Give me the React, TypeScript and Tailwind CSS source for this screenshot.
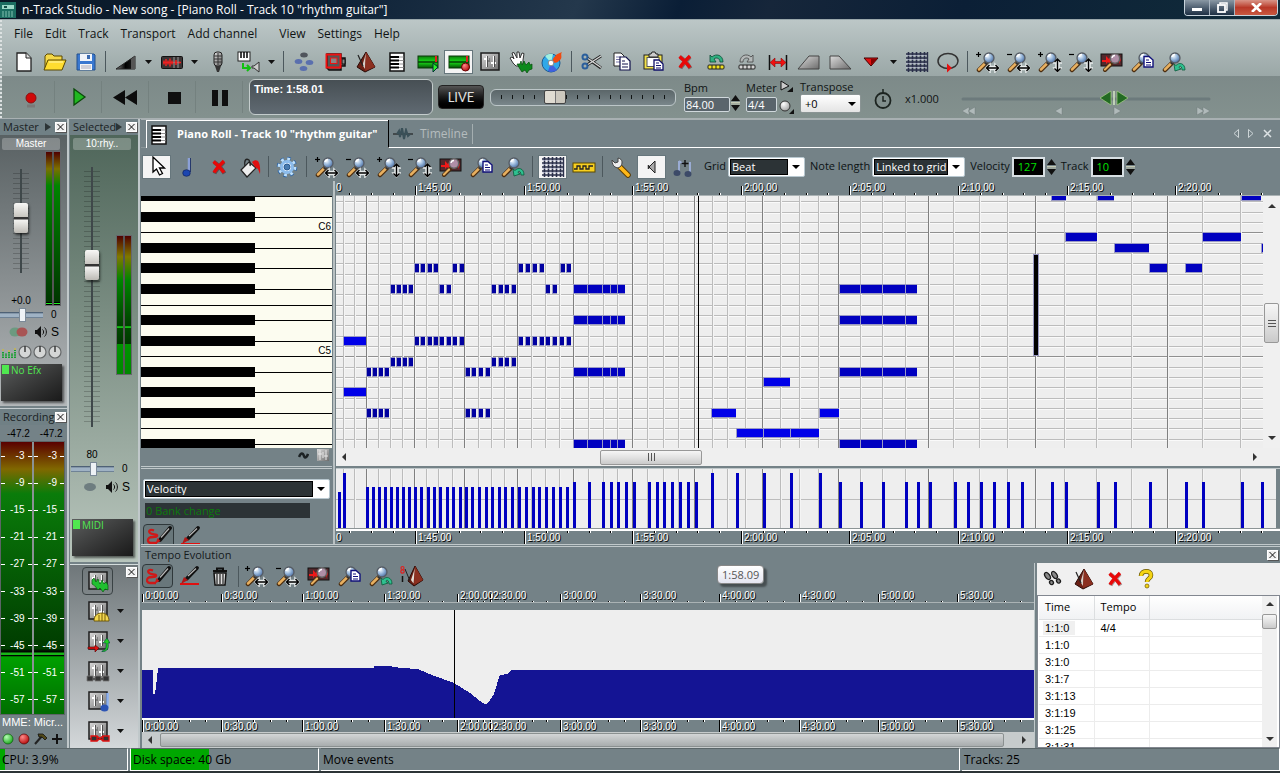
import React from "react";

type Kids = { children?: React.ReactNode };

const UI = "font-['Open_Sans','Noto_Sans',sans-serif]";
const ARIAL = "font-['Liberation_Sans',Arial,sans-serif]";

/* ---------- icon primitives ---------- */

function Svg({ children, w = 24 }: Kids & { w?: number }) {
  return (
    <svg width={w} height={22} viewBox={`0 0 ${w} 22`} aria-hidden="true" className="block shrink-0">
      {children}
    </svg>
  );
}

function Defs() {
  return (
    <svg width="0" height="0" className="absolute" aria-hidden="true">
      <defs>
        <radialGradient id="lens" cx="0.35" cy="0.3" r="0.8">
          <stop offset="0" stopColor="#f4faff" />
          <stop offset="0.5" stopColor="#8fb0d6" />
          <stop offset="1" stopColor="#3d5f94" />
        </radialGradient>
        <linearGradient id="silver" x1="0" y1="0" x2="1" y2="1">
          <stop offset="0" stopColor="#dcdcdc" />
          <stop offset="1" stopColor="#6c6c6c" />
        </linearGradient>
        <linearGradient id="dark" x1="0" y1="0" x2="1" y2="0">
          <stop offset="0" stopColor="#888" />
          <stop offset="0.5" stopColor="#000" />
          <stop offset="1" stopColor="#222" />
        </linearGradient>
        <linearGradient id="green" x1="0" y1="0" x2="0" y2="1">
          <stop offset="0" stopColor="#0c7a0c" />
          <stop offset="0.5" stopColor="#18e018" />
          <stop offset="1" stopColor="#064c06" />
        </linearGradient>
        <radialGradient id="ball" cx="0.35" cy="0.3" r="0.8">
          <stop offset="0" stopColor="#fff" />
          <stop offset="1" stopColor="#999" />
        </radialGradient>
        <radialGradient id="redball" cx="0.35" cy="0.3" r="0.8">
          <stop offset="0" stopColor="#ff8a8a" />
          <stop offset="1" stopColor="#b00000" />
        </radialGradient>
        <radialGradient id="greenball" cx="0.35" cy="0.3" r="0.8">
          <stop offset="0" stopColor="#b6ffb6" />
          <stop offset="1" stopColor="#0fa00f" />
        </radialGradient>
      </defs>
    </svg>
  );
}

const ArrowsH = () => (
  <g>
    <path d="M10 17l4-4v2.500h5V13l4 4-4 4v-2.500h-5V21z" fill="#e8ecec" stroke="#e8ecec" strokeWidth="1.500" />
    <path d="M10.500 17h12M13.500 14l-3 3 3 3M19.500 14l3 3-3 3" fill="none" stroke="#000" strokeWidth="1.400" />
  </g>
);
const ArrowsV = () => (
  <g>
    <path d="M19.500 8l3.500 4h-2v5h2l-3.500 4-3.500-4h2v-5h-2z" fill="#e8ecec" stroke="#e8ecec" strokeWidth="1.500" />
    <path d="M19.500 8v12.500M16.500 11l3-3 3 3M16.500 17.500l3 3 3-3" fill="none" stroke="#000" strokeWidth="1.400" />
  </g>
);

function Mag({ sign, children }: Kids & { sign?: "+" | "-" }) {
  return (
    <Svg>
      <path d="M3 19l7-7" stroke="#4a2c10" strokeWidth="4.500" strokeLinecap="round" />
      <path d="M3 18.500l6-6" stroke="#e8b060" strokeWidth="2.500" strokeLinecap="round" />
      <path d="M9 13l2-2" stroke="#333" strokeWidth="3" />
      <circle cx="13" cy="7" r="5" fill="url(#lens)" stroke="#565c64" strokeWidth="1.300" />
      <path d="M10 6a3 3 0 0 1 3-2.500" stroke="#fff" strokeWidth="1.300" fill="none" />
      {sign && <path d="M0 3.500h5" stroke="#000" strokeWidth="1.200" />}
      {sign === "+" && <path d="M2.500 1v5" stroke="#000" strokeWidth="1.200" />}
      {children}
    </Svg>
  );
}

const ZoomInH = () => <Mag sign="+"><ArrowsH /></Mag>;
const ZoomOutH = () => <Mag sign="-"><ArrowsH /></Mag>;
const ZoomInV = () => <Mag sign="+"><ArrowsV /></Mag>;
const ZoomOutV = () => <Mag sign="-"><ArrowsV /></Mag>;
const ZoomPage = () => (
  <Mag>
    <path d="M13 5.500h5l4 3.500v7h-9z" fill="#fff" stroke="#10107a" strokeWidth="1.400" />
    <path d="M15 9h3M15 11.500h5M15 14h5" stroke="#10107a" />
  </Mag>
);
const ZoomUndo = () => (
  <Mag>
    <path d="M12 13l1 7 6-2-2-1.500c0-2 3-2 3 2.500h3c0-7-6-8-9-4.500z" fill="#2fc090" stroke="#0a5a3a" strokeWidth="0.800" />
  </Mag>
);
const ZoomRegion = () => (
  <Svg>
    <rect x="1" y="3" width="21" height="12" fill="#53282c" stroke="#111" />
    <path d="M2 9h4V5l3 3 2-3v9l-3-3-2 2v-2H2z" fill="#f01818" />
    <path d="M19 5l2 4-2 4z" fill="#d01818" />
    <path d="M5 19l6-6" stroke="#4a2c10" strokeWidth="4" strokeLinecap="round" />
    <path d="M5 18.500l5-5" stroke="#e8b060" strokeWidth="2.200" strokeLinecap="round" />
    <circle cx="15" cy="7.500" r="4.700" fill="#c0a0bc" fillOpacity="0.850" stroke="#666" strokeWidth="1.500" />
    <path d="M12 7a3 3 0 0 1 3-2.500" stroke="#fff" strokeWidth="1.300" fill="none" />
  </Svg>
);

const NewFile = () => (
  <Svg><path d="M5 2h9l5 5v13H5z" fill="#fff" stroke="#222" strokeWidth="1.300" /><path d="M14 2v5h5" fill="#ddd" stroke="#222" /></Svg>
);
const OpenFile = () => (
  <Svg>
    <path d="M2 17V5l2-2h5l2 2h8v4" fill="#f4d848" stroke="#5a4800" />
    <path d="M1 19L5 9h18l-4 10z" fill="#ffdd30" stroke="#5a4800" /><path d="M6 11h14" stroke="#fff6b0" />
  </Svg>
);
const SaveFile = () => (
  <Svg>
    <path d="M3 3h17l1 1v15H3z" fill="#3a78d0" stroke="#24508c" />
    <rect x="6" y="3" width="12" height="7" fill="#f0f4fa" /><rect x="13" y="4" width="3" height="4" fill="#3a6ab0" />
    <rect x="6" y="13" width="12" height="6" fill="#f6f6f6" /><path d="M7 15h10M7 17h10" stroke="#aab" />
  </Svg>
);
const FadeRamp = () => (
  <Svg><path d="M2 18L21 5v13z" fill="url(#dark)" stroke="#222" /><path d="M17 8l4-3v13h-4z" fill="#555" /></Svg>
);
const WaveRegion = () => (
  <Svg>
    <rect x="1.500" y="5.500" width="21" height="12" rx="1" fill="#3a3434" stroke="#111" />
    <path d="M3 11.500h18M4 9.500v4M6 8v7M8 9.500v4M10 7.500v8M12 9.500v4M16 9v5M19 10.500v2" stroke="#f02020" strokeWidth="1.500" />
    <path d="M14 6v11M18 6v11" stroke="#999" />
  </Svg>
);
const Mic = () => (
  <Svg>
    <rect x="8" y="1" width="8" height="14" rx="3" fill="url(#silver)" stroke="#222" />
    <path d="M8 5h8M8 8h8M8 11h8M12 2v12" stroke="#333" /><path d="M9 15h6l-2 6h-2z" fill="#333" />
  </Svg>
);
const PianoRoute = () => (
  <Svg>
    <rect x="1" y="1" width="12" height="9" fill="#fff" stroke="#222" /><path d="M4 1v6M7 1v6M10 1v6" stroke="#000" strokeWidth="1.500" />
    <path d="M6 12v5h7m-3-3l3 3-3 3" fill="none" stroke="#10c010" strokeWidth="2" />
    <path d="M15 15h2l5-4v10l-5-4h-2z" fill="#ccc" stroke="#333" />
  </Svg>
);
const Dots = () => (
  <Svg>
    <ellipse cx="12" cy="4" rx="3.800" ry="2.500" fill="#50555c" />
    <g fill="#5a6fae"><ellipse cx="6.500" cy="10.500" rx="3.800" ry="2.500" /><ellipse cx="17.500" cy="11.500" rx="3.800" ry="2.500" /><ellipse cx="11.500" cy="17.500" rx="3.800" ry="2.500" /></g>
  </Svg>
);
const Chip = () => (
  <Svg>
    <path d="M4 3h14v4h4v8h-4v4H6l-2-2z" fill="#555" stroke="#111" strokeWidth="1.500" /><path d="M19 8h3v5h-3z" fill="#888" stroke="#111" />
    <rect x="3.500" y="3.500" width="14" height="13" fill="none" stroke="#f01010" strokeWidth="2" />
    <rect x="7.500" y="7" width="6.500" height="5.500" fill="#8a8484" stroke="#f01010" />
  </Svg>
);
const Metronome = () => (
  <Svg>
    <path d="M12 1L3 16l8 5 10-5z" fill="#6a2014" stroke="#2a0a06" /><path d="M12 2L8.500 14l2.500 4z" fill="#d8cfc8" />
    <path d="M12 1l-1 19 10-4z" fill="#8c3020" /><path d="M4 4l5 11" stroke="#222" strokeWidth="1.200" />
  </Svg>
);
const PianoIcon = () => (
  <Svg>
    <rect x="5" y="2" width="14" height="18" fill="#fff" stroke="#111" strokeWidth="1.500" />
    <path d="M5 6h9M5 9.500h9M5 13h9M5 16.500h9" stroke="#000" strokeWidth="1.800" /><path d="M14 6h5M14 9.500h5M14 13h5M14 16.500h5" stroke="#777" strokeWidth="0.800" />
  </Svg>
);
const TrackBars = ({ rec }: { rec?: boolean }) => (
  <Svg>
    <rect x="2" y="5" width="20" height="12" fill="url(#green)" stroke="#0a3a0a" />
    <path d="M2 11h20" stroke="#063c06" strokeWidth="1.500" /><path d="M20 5v6" stroke="#e02020" strokeWidth="2" />
    {rec ? <circle cx="18.500" cy="16" r="4" fill="url(#redball)" stroke="#600" /> : <path d="M17 12l5 4-5 5z" fill="#2af02a" stroke="#033" />}
  </Svg>
);
const MixerPanel = () => (
  <g>
    <rect x="3" y="2" width="18" height="17" fill="url(#silver)" stroke="#1c1c1c" strokeWidth="1.500" />
    <path d="M8.500 5v11M15.500 5v11" stroke="#fff" strokeWidth="1.200" /><path d="M6 8h5M13 12h5" stroke="#fff" strokeWidth="2.200" />
    <path d="M9.500 5v11M16.500 5v11M11 7v4" stroke="#333" strokeWidth="0.800" />
  </g>
);
const MixerIcon = () => <Svg><MixerPanel /></Svg>;
const Hand = () => (
  <Svg>
    <path d="M4 12L1 7l2-1 2 2-2-6 2-.500L8 7V1h2l1 6 2-5 2 .500L14 9v6H7z" fill="#fff" stroke="#333" />
    <path d="M8 13h3l1-3 1 4 2-4 2 4 3-3 1 3 2-1v5l-3 1-2 3-2-3-3 2-2-3z" fill="#0d8a1d" stroke="#064a0c" strokeWidth="0.700" />
  </Svg>
);
const Disc = () => (
  <Svg>
    <circle cx="11" cy="12" r="9" fill="#30a8e8" stroke="#1a5a90" /><path d="M11 12L5 5a9 9 0 0 1 8-2z" fill="#a0f0e0" /><path d="M11 12l6 7a9 9 0 0 1-9 1z" fill="#4060e0" />
    <path d="M13 11c-1-4 2-5 3-7 1-1 4-2 6-3-2 3 1 5-2 8-2 2-4 4-7 2z" fill="#f04a10" /><circle cx="11" cy="12" r="2.800" fill="#fff" stroke="#888" />
  </Svg>
);
const Scissors = () => (
  <Svg>
    <path d="M7 14L21 5M7 7l14 10" stroke="#222" strokeWidth="3" /><path d="M8 13.500L21 5M8 7.500L21 16.500" stroke="#d8d8d8" strokeWidth="1.300" />
    <circle cx="5" cy="6" r="2.500" fill="none" stroke="#2b5f9c" strokeWidth="2" /><circle cx="5" cy="15" r="2.500" fill="none" stroke="#2b5f9c" strokeWidth="2" />
  </Svg>
);
const CopyIcon = () => (
  <Svg>
    <path d="M3 2h7l3 3v10H3z" fill="#fff" stroke="#222" /><path d="M5 6h5M5 8.500h5M5 11h5" stroke="#77a" />
    <path d="M9 6h6l4 4v9H9z" fill="#fff" stroke="#10104a" strokeWidth="1.200" /><path d="M11 10h3M11 13h6M11 16h6" stroke="#10104a" />
  </Svg>
);
const PasteIcon = () => (
  <Svg>
    <rect x="2" y="4" width="18" height="14" fill="#f2e24a" stroke="#222" /><rect x="5" y="6.500" width="12" height="9" fill="#fff" stroke="#555" />
    <path d="M7 6V3h2l1-2h3l1 2h2v3z" fill="#ccc" stroke="#222" />
    <path d="M12 9h5l4 4v6h-9z" fill="#fff" stroke="#10106a" strokeWidth="1.300" /><path d="M14 12h3M14 14.500h5M14 17h5" stroke="#10106a" />
  </Svg>
);
const RedX = () => (
  <Svg>
    <path d="M7 6c3 2 8 7 10.500 11.500M17 6c-3 3-8 8-9.500 11.500" stroke="#400" strokeOpacity="0.400" strokeWidth="4" fill="none" />
    <path d="M6.500 5.500C9 7.500 14 12.500 17 16.500M17 5C14 8 9 13 7 16.500" stroke="#e80808" strokeWidth="3.400" fill="none" />
  </Svg>
);
const UndoBar = ({ gray }: { gray?: boolean }) => (
  <Svg>
    {gray ? (
      <path d="M18 11V4l-2 2c-4-4-11-2-11 5h3c0-4 4-5 6-3l-2 3z" fill="#b4b8b8" stroke="#444" strokeWidth="0.800" />
    ) : (
      <path d="M6 11V4l2 2c4-4 11-2 11 5h-3c0-4-4-5-6-3l2 3z" fill="#2fb080" stroke="#0a4a34" strokeWidth="0.800" />
    )}
    <rect x="4" y="14" width="16" height="4" rx="1" fill={gray ? "#d4d4d4" : "#f0e020"} stroke="#222" /><path d="M8 14v4M12 14v4M16 14v4" stroke="#222" />
  </Svg>
);
const TrimIcon = () => (
  <Svg><path d="M3.500 4v15M20.500 4v15" stroke="#111" strokeWidth="1.500" /><path d="M4 11.500l5-4.500v3.500h6V7l5 4.500-5 4.500v-3.500H9V16z" fill="#f01010" stroke="#700" strokeWidth="0.500" /></Svg>
);
const RampIn = () => <Svg><path d="M1 18L12 5h10v13z" fill="url(#silver)" stroke="#444" /></Svg>;
const RampOut = () => <Svg><path d="M2 18V5h9l12 13z" fill="url(#silver)" stroke="#444" /></Svg>;
const RedTriangle = () => <Svg><path d="M5 7h14l-7 8z" fill="#e01010" stroke="#400" /><path d="M12 8h6l-6 6z" fill="#800" /></Svg>;
const GridIcon = () => (
  <Svg>
    {[3, 7, 11, 15, 19].map((v) => <path key={v} d={`M1 ${v}h22M${v + 0.5} 1v20`} stroke="#2a2f4a" strokeWidth="1.600" />)}
    {[4, 8, 12, 16].map((v) => <path key={v} d={`M1 ${v + 0.5}h22`} stroke="#c4c8dc" strokeWidth="0.600" />)}
    <path d="M22.500 1v20" stroke="#2a2f4a" strokeWidth="1.400" />
  </Svg>
);
const LoopIcon = () => <Svg><ellipse cx="12" cy="10" rx="10" ry="7.500" fill="none" stroke="#333" strokeWidth="1.500" /><path d="M11 12.500l5 4.500-5 4.500z" fill="#e81010" /></Svg>;
const Pointer = () => <Svg><path d="M8 1v15l3.500-3 3 6 3-1.500-3-5.500h5z" fill="#fff" stroke="#000" strokeWidth="1.300" /></Svg>;
const NoteIcon = () => (
  <Svg><path d="M13 2v15" stroke="#8ba0d8" strokeWidth="2.500" /><path d="M14.500 2v14" stroke="#26386c" /><ellipse cx="10.500" cy="17" rx="3.800" ry="3.300" fill="#1c46b0" stroke="#0a1a50" strokeWidth="0.600" /></Svg>
);
const Bucket = () => (
  <Svg>
    <path d="M3 14L11 6l7 6-9 9z" fill="#eee" stroke="#222" strokeWidth="1.200" /><path d="M7 10c-1-6 1-8 4-6 1 2 2 4 1 6" fill="none" stroke="#222" strokeWidth="1.300" />
    <path d="M14 6c5-4 9-1 8 12l-2-5-3-2z" fill="#e01010" />
  </Svg>
);
const Gear = () => (
  <Svg>
    <circle cx="12" cy="11" r="8.500" fill="none" stroke="#2a62a4" strokeWidth="3.500" strokeDasharray="3.400 3.270" />
    <circle cx="12" cy="11" r="8" fill="none" stroke="#bfe0fa" strokeWidth="2.800" strokeDasharray="2.800 3.480" />
    <circle cx="12" cy="11" r="5.500" fill="#e8f4ff" stroke="#8cbcec" strokeWidth="3" /><circle cx="12" cy="11" r="3" fill="#4a7cb0" stroke="#2a5a90" />
  </Svg>
);
const SquareWave = () => (
  <Svg><rect x="1" y="7" width="22" height="9" fill="#f8d020" stroke="#5a4800" /><path d="M2 13h3v-3h3v3h3v-3h3v3h3v-3h4" fill="none" stroke="#222" strokeWidth="1.300" /></Svg>
);
const Wrench = () => (
  <Svg><path d="M11 11l8 8" stroke="#5a3a00" strokeWidth="5.500" strokeLinecap="round" /><path d="M11 11l8 8" stroke="#ffb818" strokeWidth="3.800" strokeLinecap="round" />
    <path d="M3 4l3 3 3-1 0-4c5 1 5 6 2 9-3 2-8 0-8-7z" fill="#eee" stroke="#444" /></Svg>
);
const Speaker = () => <Svg><path d="M9 11l6-6v12z" fill="#aaa" stroke="#222" /><path d="M8.500 9v4" stroke="#333" strokeWidth="1.500" /></Svg>;
const NotesPlus = () => (
  <Svg>
    <path d="M8 5v12M19 6v12M8 5l4 3" stroke="#9aacd4" strokeWidth="2" /><ellipse cx="6" cy="17" rx="3.500" ry="3" fill="#3c4a68" /><ellipse cx="17" cy="18" rx="3.500" ry="3" fill="#3c4a68" />
    <path d="M14 4v7M10.500 7.500h7" stroke="#111" strokeWidth="1.400" />
  </Svg>
);
const BrushCurve = () => (
  <Svg w={26}>
    <path d="M8 5.500C4 4 2 6 4 8s8 1 7 3-6 0-8 2-1 5 2 5h6" fill="none" stroke="#d01818" strokeWidth="2.300" />
    <path d="M14 15L24 3" stroke="#111" strokeWidth="3.800" strokeLinecap="round" /><path d="M15 12.500L23 3.500" stroke="#b8b8b8" strokeWidth="1.200" /><path d="M9.500 19l2-6 3 3z" fill="#d01818" />
  </Svg>
);
const BrushLine = () => (
  <Svg>
    <path d="M3 19h19" stroke="#e01010" strokeWidth="2" /><path d="M10 13.500L20 3" stroke="#111" strokeWidth="3.800" strokeLinecap="round" />
    <path d="M11 11L19 3.500" stroke="#b8b8b8" strokeWidth="1.200" /><path d="M4 19l3-7 4 3z" fill="#b01818" />
  </Svg>
);
const Trash = () => (
  <Svg><path d="M5 6h14M9 6V3.500h6V6" stroke="#111" strokeWidth="2" fill="none" /><path d="M6 8h12l-1 12H7z" fill="#ddd" stroke="#111" strokeWidth="1.500" /><path d="M9 9v10M12 9v10M15 9v10" stroke="#333" strokeWidth="1.300" /></Svg>
);
const TempoMetronome = () => (
  <Svg>
    <path d="M15 1L8 16l6 5 9-6z" fill="#6a2014" stroke="#2a0a06" /><path d="M15 3l-4 12 2.500 3.500z" fill="#e4dcd4" /><path d="M15 1l-1 19 9-5z" fill="#8c3020" /><path d="M5 4l5 12" stroke="#222" />
    <circle cx="2.500" cy="3" r="1.500" fill="none" stroke="#e02020" strokeWidth="1.200" /><circle cx="2.500" cy="6.500" r="1.700" fill="none" stroke="#e02020" strokeWidth="1.200" /><path d="M2.500 11v6" stroke="#111" strokeWidth="1.500" />
  </Svg>
);
const Footsteps = () => (
  <Svg>
    <g fill="#888" stroke="#1c1c1c" strokeWidth="1.300">
      <ellipse cx="6.500" cy="8" rx="2.200" ry="4" transform="rotate(-35 6.500 8)" /><ellipse cx="10.500" cy="14.500" rx="1.800" ry="2.200" transform="rotate(-35 10.500 14.500)" />
      <ellipse cx="13.500" cy="7" rx="2.200" ry="4" transform="rotate(-35 13.500 7)" /><ellipse cx="17.500" cy="13" rx="1.800" ry="2.200" transform="rotate(-35 17.500 13)" />
    </g>
  </Svg>
);
const Question = () => (
  <Svg><path d="M7 8c0-6 10-6 10-1 0 4-4 3-4 7" fill="none" stroke="#6a5600" strokeWidth="4.600" /><path d="M7 8c0-6 10-6 10-1 0 4-4 3-4 7" fill="none" stroke="#f4d414" strokeWidth="3.200" /><circle cx="13" cy="18" r="2" fill="#f4d414" stroke="#6a5600" strokeWidth="0.700" /></Svg>
);

/* ---------- small controls ---------- */

function Tool({ label, on, children }: Kids & { label: string; on?: boolean }) {
  return (
    <button
      type="button"
      aria-label={label}
      className={
        on
          ? "mx-px flex h-6 w-[29px] shrink-0 items-center justify-center border border-[#66767c] bg-[#f4f4f4]"
          : "flex h-6 w-[31px] shrink-0 items-center justify-center"
      }
    >
      {children}
    </button>
  );
}

function DarkTool({ label, children }: Kids & { label: string }) {
  return (
    <button type="button" aria-label={label} className="flex h-6 w-[31px] shrink-0 items-center justify-center rounded-sm border border-[#2f383b] bg-[#69777b]">
      {children}
    </button>
  );
}

const Caret = ({ label }: { label: string }) => (
  <button type="button" aria-label={label} className="flex h-6 w-[15px] shrink-0 items-center justify-center">
    <svg width="7" height="4" viewBox="0 0 7 4"><path d="M0 0h7L3.500 4z" fill="#111" /></svg>
  </button>
);
const Sep = ({ narrow }: { narrow?: boolean }) => (
  <span className={narrow ? "flex w-1.5 shrink-0 justify-center" : "flex w-[9px] shrink-0 justify-center"}>
    <span className="h-[21px] w-px bg-[#4c585d]" />
  </span>
);

const CloseBox = ({ label }: { label: string }) => (
  <button type="button" aria-label={label} className="flex h-[10px] w-[11px] shrink-0 items-center justify-center border border-white bg-[#f0f0f0] shadow-[1px_1px_0_#555]">
    <svg width="7" height="6" viewBox="0 0 7 6"><path d="M.5 0l6 6M6.500 0l-6 6" stroke="#111" /></svg>
  </button>
);

const Spin = ({ label }: { label: string }) => (
  <button type="button" aria-label={label} className="flex h-4 w-[9px] shrink-0 items-center justify-center">
    <svg width="9" height="16" viewBox="0 0 9 16"><path d="M0 6l4.500-6L9 6zM0 10h9l-4.500 6z" fill="#111" /><path d="M0 7.500h9M0 9h9" stroke="#d8dcc0" strokeWidth="0.800" /></svg>
  </button>
);

function DarkSelect({ id, value, className }: { id: string; value: string; className: string }) {
  return (
    <span className={`flex h-5 shrink-0 items-center rounded-xs border border-[#b8c8d0] bg-white p-px ${className}`}>
      <select id={id} defaultValue={value} aria-label={id} className="h-full min-w-0 flex-1 appearance-none rounded-none border border-black bg-[#2c3336] pl-px text-[11px] leading-3 text-white outline-none">
        <option>{value}</option>
      </select>
      <svg width="15" height="4" viewBox="0 0 15 4" className="pointer-events-none"><path d="M4 0h8l-4 4z" fill="#000" /></svg>
    </span>
  );
}

/* ---------- header ---------- */

function TitleBar() {
  return (
    <header className="flex h-5 shrink-0 items-start justify-between border-b border-[#9aa8ac] bg-[linear-gradient(110deg,#0a1826,#0d2136_25%,#24384c_45%,#0a1e36_53%,#16263a_60%,#0b1f36_75%,#112c3a)]">
      <h1 className={`flex items-center gap-1.5 text-[12px] leading-5 text-white ${UI}`}>
        <svg width="16" height="16" viewBox="0 0 16 16"><rect width="16" height="16" fill="#1c6e62" /><path d="M2 3h12v4H2z" fill="#9cd8c8" /><path d="M3 9v6M6 9v6M9 9v6M12 9v6" stroke="#80c0b0" /><path d="M4 4h3v2H4z" fill="#135048" /></svg>
        n-Track Studio - New song - [Piano Roll - Track 10 "rhythm guitar"]
      </h1>
      <div className="mr-0.5 flex h-4 overflow-hidden rounded-b border border-t-0 border-[#c8d4dc]">
        <button type="button" aria-label="Minimize" className="flex w-[25px] items-center justify-center border-r border-[#a8b4c0] bg-linear-to-b from-[#8a98a4] to-[#1e3044]">
          <span className="mt-1 h-[3px] w-[10px] bg-white" />
        </button>
        <button type="button" aria-label="Restore" className="flex w-[25px] items-center justify-center border-r border-[#a8b4c0] bg-linear-to-b from-[#8a98a4] to-[#1e3044]">
          <svg width="11" height="11" viewBox="0 0 11 11"><path d="M3 2V1h7v7H9" fill="none" stroke="#fff" strokeWidth="1.500" /><rect x="1" y="3" width="7" height="7" fill="none" stroke="#fff" strokeWidth="1.800" /></svg>
        </button>
        <button type="button" aria-label="Close" className="flex w-[42px] items-center justify-center bg-linear-to-b from-[#d89488] via-[#b83828] to-[#c85840]">
          <svg width="11" height="9" viewBox="0 0 11 9"><path d="M1 0l9 9M10 0L1 9" stroke="#fff" strokeWidth="2.600" /></svg>
        </button>
      </div>
    </header>
  );
}

const menus = ["File", "Edit", "Track", "Transport", "Add channel", "View", "Settings", "Help"];

function MenuBar() {
  return (
    <nav className={`flex h-[27px] shrink-0 items-center gap-3 pl-3 text-[12px] text-[#101414] ${UI}`}>
      {menus.map((m) => (
        <button key={m} type="button" className={m === "View" ? "ml-2.5" : ""}>{m}</button>
      ))}
    </nav>
  );
}

function MainToolbar() {
  return (
    <div className="flex h-[29px] shrink-0 items-center pl-1.5">
      <Tool label="New"><NewFile /></Tool>
      <Tool label="Open"><OpenFile /></Tool>
      <Tool label="Save"><SaveFile /></Tool>
      <Sep />
      <Tool label="Volume envelope"><FadeRamp /></Tool><Caret label="Envelope options" />
      <Tool label="Wave tracks"><WaveRegion /></Tool><Caret label="Wave options" />
      <Tool label="Audio input"><Mic /></Tool>
      <Tool label="MIDI routing"><PianoRoute /></Tool><Caret label="MIDI options" />
      <Sep />
      <Tool label="Loops"><Dots /></Tool>
      <Tool label="Plug-ins"><Chip /></Tool>
      <Tool label="Metronome"><Metronome /></Tool>
      <Tool label="Piano roll"><PianoIcon /></Tool>
      <Tool label="Playback meters"><TrackBars /></Tool>
      <Tool label="Recording meters" on><TrackBars rec /></Tool>
      <Tool label="Mixer"><MixerIcon /></Tool>
      <Tool label="Hand tool"><Hand /></Tool>
      <Tool label="Burn disc"><Disc /></Tool>
      <Sep />
      <Tool label="Cut"><Scissors /></Tool>
      <Tool label="Copy"><CopyIcon /></Tool>
      <Tool label="Paste"><PasteIcon /></Tool>
      <Tool label="Delete"><RedX /></Tool>
      <Tool label="Undo"><UndoBar /></Tool>
      <Tool label="Redo"><UndoBar gray /></Tool>
      <Tool label="Trim"><TrimIcon /></Tool>
      <Tool label="Fade in"><RampIn /></Tool>
      <Tool label="Fade out"><RampOut /></Tool>
      <Tool label="Marker"><RedTriangle /></Tool><Caret label="Marker options" />
      <Tool label="Grid"><GridIcon /></Tool>
      <Tool label="Loop"><LoopIcon /></Tool>
      <Sep />
      <Tool label="Zoom in"><ZoomInH /></Tool>
      <Tool label="Zoom out"><ZoomOutH /></Tool>
      <Tool label="Zoom in vertically"><ZoomInV /></Tool>
      <Tool label="Zoom out vertically"><ZoomOutV /></Tool>
      <Tool label="Zoom to selection"><ZoomRegion /></Tool>
      <Tool label="Zoom to song"><ZoomPage /></Tool>
      <Tool label="Previous zoom"><ZoomUndo /></Tool>
    </div>
  );
}

function TransportButton({ label, children }: Kids & { label: string }) {
  return (
    <button type="button" aria-label={label} className="flex h-8 w-[47px] shrink-0 items-center justify-center border-r border-[#74817f]">
      <svg width="26" height="22" viewBox="0 0 26 22">{children}</svg>
    </button>
  );
}

function Transport() {
  return (
    <div className={`flex h-[42px] shrink-0 items-center bg-linear-to-b from-[#7d8a89] to-[#83918e] pl-1.5 text-[11px] leading-3 text-[#101414] ${UI}`}>
      <TransportButton label="Record"><circle cx="13" cy="12" r="5" fill="#d00808" stroke="#8a1010" /><path d="M9 20h8" stroke="#6a4a4a" strokeOpacity="0.300" strokeWidth="3" /></TransportButton>
      <TransportButton label="Play"><path d="M9 3l11 8-11 8z" fill="#20b820" stroke="#0a4a0a" strokeWidth="1.300" /></TransportButton>
      <TransportButton label="Rewind"><path d="M13 4v15L1 11.500zM25 4v15l-12-7.500z" fill="#0c0c0c" /></TransportButton>
      <TransportButton label="Stop"><rect x="9" y="6" width="13" height="12" fill="#101010" /></TransportButton>
      <TransportButton label="Pause"><path d="M6 4h6v16H6zM16 4h6v16h-6z" fill="#101010" /></TransportButton>
      <output className={`ml-1.5 h-9 w-[184px] shrink-0 rounded-md border border-[#c4cccc] bg-linear-to-b from-[#474f54] to-[#606a72] px-1 pt-[3px] text-[11px] font-bold leading-3 text-white ${ARIAL}`}>
        Time: 1:58.01
      </output>
      <button type="button" className="ml-[5px] h-6 w-[46px] shrink-0 rounded border border-[#222] bg-linear-to-b from-[#555] via-[#1a1a1a] to-[#000] font-['Lato',sans-serif] text-[13px] text-[#e0e0e0]">LIVE</button>
      <div className="relative ml-1.5 flex h-[17px] w-[186px] shrink-0 items-center justify-between rounded-md border border-[#bcc6c8] bg-linear-to-b from-[#5b6669] to-[#79868a] px-2.5">
        {Array.from({ length: 16 }, (_, i) => <span key={i} className="h-1 w-px bg-[#101414]" />)}
        <input
          type="range"
          aria-label="Song position"
          defaultValue={33}
          className="absolute inset-0 m-0 w-full appearance-none bg-transparent [&::-webkit-slider-thumb]:h-3.5 [&::-webkit-slider-thumb]:w-[22px] [&::-webkit-slider-thumb]:appearance-none [&::-webkit-slider-thumb]:rounded-xs [&::-webkit-slider-thumb]:border [&::-webkit-slider-thumb]:border-[#444] [&::-webkit-slider-thumb]:bg-[linear-gradient(to_right,#e0dcd2_48%,#777_48%,#777_54%,#ccc8be_54%)]"
        />
      </div>
      <div className="ml-2 flex shrink-0 flex-col gap-[3px]">
        <label htmlFor="bpm">Bpm</label>
        <input id="bpm" defaultValue="84.00" className="h-[15px] w-[46px] rounded-xs border border-[#d0d8dc] bg-[#5a656c] px-px text-[11px] text-white" />
      </div>
      <div className="ml-px mt-3"><Spin label="Adjust tempo" /></div>
      <div className="ml-1.5 flex shrink-0 flex-col gap-[3px]">
        <label htmlFor="meter" className="w-[31px]">Meter</label>
        <input id="meter" defaultValue="4/4" className="h-[15px] w-[31px] rounded-xs border border-[#d0d8dc] bg-[#5a656c] px-px text-[11px] text-white" />
      </div>
      <div className="ml-0.5 flex flex-col gap-2">
        <button type="button" aria-label="Tap tempo"><svg width="15" height="12" viewBox="0 0 15 12"><path d="M2 1l8 5-8 4z" fill="#ccc" stroke="#111" /><path d="M14 7v5H8z" fill="#111" /></svg></button>
        <button type="button" aria-label="Beat sync"><svg width="15" height="14" viewBox="0 0 15 14"><circle cx="6" cy="6" r="5" fill="url(#ball)" stroke="#333" /><path d="M15 9v5h-5z" fill="#111" /></svg></button>
      </div>
      <div className="ml-1.5 flex shrink-0 flex-col gap-px">
        <label htmlFor="transpose">Transpose</label>
        <span className="flex h-[19px] w-[61px] items-center rounded-xs border border-[#8a9494] bg-linear-to-b from-white to-[#e4e4e4]">
          <select id="transpose" className="h-full min-w-0 flex-1 appearance-none bg-transparent pl-1 text-[11px] leading-3 text-black outline-none"><option>+0</option></select>
          <svg width="15" height="4" viewBox="0 0 15 4" className="pointer-events-none"><path d="M3 0h8L7 4z" /></svg>
        </span>
      </div>
      <svg width="20" height="22" viewBox="0 0 20 22" className="ml-3 mt-1 shrink-0"><circle cx="10" cy="12.500" r="7.500" fill="none" stroke="#1c2420" strokeWidth="1.800" /><path d="M10 1v4M10 8v5h3" stroke="#1c2420" strokeWidth="1.500" fill="none" /></svg>
      <span className="ml-3 mt-1 w-[34px] shrink-0">x1.000</span>
      <div className="relative ml-[22px] h-9 w-[250px] shrink-0">
        <svg width="250" height="36" viewBox="0 0 250 36">
          <path d="M2 20h246" stroke="#6c7a7c" strokeWidth="3" strokeLinecap="round" />
          <path d="M139 19l11-7v14z" fill="#236a23" stroke="#a8d088" strokeOpacity="0.700" /><path d="M153 12v14" stroke="#d4e8c4" strokeWidth="1.500" /><path d="M167 19l-11-7v14z" fill="#236a23" stroke="#a8d088" strokeOpacity="0.700" />
          <g fill="#b0baba" stroke="#6a7676" strokeWidth="0.400"><path d="M1 32l7-4v8zM7 32l7-4v8zM94 32l7-4v8zM160 32l-7-4v8zM249 32l-7-4v8zM243 32l-7-4v8z" /></g>
        </svg>
        <input type="range" aria-label="Playback speed" defaultValue={62} className="absolute inset-0 m-0 w-full opacity-0" />
      </div>
    </div>
  );
}

/* ---------- mixer strips ---------- */

function PanelHeader({ title, arrow }: { title: string; arrow?: boolean }) {
  return (
    <div className={`flex h-4 shrink-0 items-center justify-between bg-[#708085] pl-[3px] text-[11px] leading-4 text-[#1a2224] ${UI}`}>
      <span>{title}</span>
      <span className="flex items-center gap-1 pr-px">
        {arrow && <svg width="6" height="8" viewBox="0 0 6 8"><path d="M0 0l6 4-6 4z" fill="#2c3436" /></svg>}
        <CloseBox label={`Close ${title}`} />
      </span>
    </div>
  );
}

function Fader({ label, value, className }: { label: string; value: number; className: string }) {
  return (
    <div className={`relative ml-[13px] w-4 ${className}`}>
      <div className="absolute inset-y-1 left-0 w-4 bg-[repeating-linear-gradient(to_bottom,#0003_0_1px,transparent_1px_5px)]" />
      <div className="absolute inset-y-0 left-[7px] w-0.5 bg-[#3f484a]" />
      <input
        type="range"
        aria-label={label}
        defaultValue={value}
        className="absolute inset-0 m-0 h-full w-4 appearance-none bg-transparent [direction:rtl] [writing-mode:vertical-lr] [&::-webkit-slider-thumb]:h-[30px] [&::-webkit-slider-thumb]:w-3.5 [&::-webkit-slider-thumb]:appearance-none [&::-webkit-slider-thumb]:rounded-xs [&::-webkit-slider-thumb]:bg-[linear-gradient(to_bottom,#f8f8f6,#c8c6c0_46%,#333_48%,#333_54%,#f4f4f2_56%,#bcbab4)] [&::-webkit-slider-thumb]:shadow-[1px_2px_3px_#0009]"
      />
    </div>
  );
}

function Pan({ label }: { label: string }) {
  return (
    <input
      type="range"
      aria-label={label}
      defaultValue={52}
      className="m-0 h-4 w-[43px] appearance-none bg-[linear-gradient(to_bottom,transparent_5px,#34475c_5px,#9fb2c4_7px,#9fb2c4_10px,#3f5368_11px,transparent_11px)] [&::-webkit-slider-thumb]:h-3.5 [&::-webkit-slider-thumb]:w-[7px] [&::-webkit-slider-thumb]:appearance-none [&::-webkit-slider-thumb]:border [&::-webkit-slider-thumb]:border-[#7c8a98] [&::-webkit-slider-thumb]:bg-[#eef2f6]"
    />
  );
}

const SpeakerSmall = () => (
  <svg width="12" height="12" viewBox="0 0 12 12"><path d="M0 4h2l4-4v12L2 8H0z" fill="#111" /><path d="M7.500 3.500c1.500 1 1.500 4 0 5M9.500 1.500c2.500 2 2.500 7 0 9" stroke="#111" fill="none" /></svg>
);

function EffectBox({ text }: { text: string }) {
  return (
    <button type="button" className={`flex h-[37px] w-[61px] shrink-0 items-start gap-0.5 bg-linear-to-br from-[#5c5e5e] to-[#1a1a1a] p-px text-[10px] leading-[10px] text-[#50e850] shadow-[2px_2px_2px_#0008] ${UI}`}>
      <span className="h-[9px] w-[7px] bg-[#50e850]" />
      {text}
    </button>
  );
}

const StripLabel = ({ children }: Kids) => (
  <div className={`ml-0.5 mt-[3px] h-3 w-[58px] shrink-0 rounded-xs bg-white/25 text-center text-[10px] leading-3 text-white ${ARIAL}`}>{children}</div>
);

function MasterStrip() {
  return (
    <section className={`flex shrink-0 flex-col text-[10px] leading-3 text-black ${ARIAL}`}>
      <PanelHeader title="Master" arrow />
      <div className="flex flex-col bg-linear-to-b from-[#596163] to-[#b4b8ba] pb-[5px]">
        <StripLabel>Master</StripLabel>
        <div className="flex">
          <div className="flex w-[45px] shrink-0 flex-col pt-[19px]">
            <Fader label="Master volume" value={54} className="h-[104px]" />
            <span className="mt-[22px] w-[42px] text-center">+0.0</span>
          </div>
          <div className="mt-px flex h-[155px] w-4 gap-0.5 border border-[#66666c] bg-[#555]">
            {[0, 1].map((i) => (
              <span key={i} className="flex flex-1 flex-col justify-end bg-[linear-gradient(to_bottom,#500000,#7c7000_11%,#008400_22%,#003400)]"><span className="h-[3px] border-y border-black bg-[#20f020]" /></span>
            ))}
          </div>
        </div>
        <div className="flex items-center"><Pan label="Master pan" /><span className="ml-2">0</span></div>
        <div className="flex h-[18px] items-center pl-[9px]">
          <svg width="20" height="10" viewBox="0 0 20 10"><ellipse cx="6" cy="5" rx="5.500" ry="4.500" fill="#6c9a80" /><ellipse cx="13" cy="5" rx="5.500" ry="4.500" fill="#a85454" /></svg>
          <span className="ml-1.5"><SpeakerSmall /></span>
          <span className="ml-1 text-[12px]">S</span>
        </div>
        <div className="mt-0.5 flex h-[18px] items-center gap-px pl-0.5">
          <svg width="15" height="12" viewBox="0 0 15 12"><path d="M1 12V5M4 12V7M7 12V6M10 12V7M13 12V4" stroke="#18a030" strokeWidth="2" strokeDasharray="1.500 0.800" /><path d="M0 4h2M12 3h2M6 5h2" stroke="#d8c020" /></svg>
          {[0, 1, 2].map((i) => (
            <svg key={i} width="14" height="14" viewBox="0 0 14 14"><circle cx="7" cy="7" r="6" fill="#d4d6d6" stroke="#66696a" strokeWidth="1.200" /><path d="M7 1v6" stroke="#222" strokeWidth="1.300" /></svg>
          ))}
        </div>
        <div className="mt-[3px] pl-px"><EffectBox text="No Efx" /></div>
      </div>
    </section>
  );
}

function RecordingPanel() {
  return (
    <section className={`flex min-h-0 flex-1 flex-col border-t border-[#c4cccf] text-[10px] text-black ${ARIAL}`}>
      <PanelHeader title="Recording" />
      <div className="flex h-4 shrink-0 items-center gap-2.5 pl-[7px]"><span>-47.2</span><span>-47.2</span></div>
      <div className="mr-0.5 flex min-h-0 flex-1 gap-0.5 border border-[#5c6466] bg-[#8a9294]">
        {[0, 1].map((c) => (
          <div key={c} className="flex flex-1 flex-col justify-between overflow-hidden bg-[linear-gradient(to_bottom,#5a0000,#806800_10%,#0a7c0a_19%,#003c00_76%,#000_77%,#20f020_78%,#000_78.500%,#00a000_79%,#006e00)] py-2 text-white">
            {[3, 9, 15, 21, 27, 33, 39, 45, 51, 57].map((n) => (
              <span key={n} className="flex h-3 items-center justify-between leading-3">
                <span className="h-px w-1 bg-white" />
                <span className="ml-auto pr-[3px]">-{n}</span>
                <span className="h-px w-1 bg-white" />
              </span>
            ))}
          </div>
        ))}
      </div>
      <p className="shrink-0 truncate pl-0.5 text-[11px] leading-[15px] text-white">MME: Micr...</p>
      <div className="flex h-[18px] shrink-0 items-center gap-1 pl-0.5">
        <svg width="12" height="12" viewBox="0 0 12 12"><circle cx="6" cy="6" r="5" fill="url(#greenball)" stroke="#0a5a0a" strokeWidth="0.700" /></svg>
        <svg width="12" height="12" viewBox="0 0 12 12"><circle cx="6" cy="6" r="5" fill="url(#redball)" stroke="#500" strokeWidth="0.700" /></svg>
        <svg width="13" height="12" viewBox="0 0 13 12"><path d="M1 11l7-8" stroke="#222" strokeWidth="2" /><path d="M4 1h5l4 4-2 2-3-3H5z" fill="#504818" stroke="#111" strokeWidth="0.800" /></svg>
        <svg width="12" height="12" viewBox="0 0 12 12"><path d="M6 1v10M1 6h10" stroke="#111" strokeWidth="2" /></svg>
      </div>
    </section>
  );
}

function SelectedStrip() {
  return (
    <section className={`flex shrink-0 flex-col text-[10px] leading-3 text-black ${ARIAL}`}>
      <PanelHeader title="Selected" arrow />
      <div className="flex flex-col bg-linear-to-b from-[#4f665a] to-[#b9c6bd] pb-1.5 pl-px">
        <StripLabel>10:rhy..</StripLabel>
        <div className="flex">
          <div className="flex w-[45px] shrink-0 flex-col pt-[17px]">
            <Fader label="Track volume" value={64} className="h-[260px]" />
            <span className="mt-[22px] w-[42px] text-center">80</span>
          </div>
          <div className="mt-[85px] flex h-[140px] w-4 gap-0.5 border border-[#66666c] bg-[#555]">
            {[0, 1].map((i) => (
              <span key={i} className="flex-1 bg-[linear-gradient(to_bottom,#500000,#807800_15%,#008400_32%,#004000_65%,#20f020_66%,#004800_67%,#003800_78%,#009400_78%,#008800)]" />
            ))}
          </div>
        </div>
        <div className="flex items-center"><Pan label="Track pan" /><span className="ml-2">0</span></div>
        <div className="mt-px flex h-[18px] items-center pl-3">
          <svg width="14" height="10" viewBox="0 0 14 10"><ellipse cx="7" cy="5" rx="6" ry="4" fill="#6e7d80" /></svg>
          <span className="ml-[9px]"><SpeakerSmall /></span>
          <span className="ml-1 text-[12px]">S</span>
        </div>
        <div className="mt-[23px] pl-px"><EffectBox text="MIDI" /></div>
      </div>
    </section>
  );
}

const paneTools: { label: string; art: React.ReactNode }[] = [
  { label: "Pane wave", art: <path d="M6 10l2-2 2 4 2-3 2 5 2-4 2 4 2-2 2 3v5l-3-1-2 3-3-4-2 2-3-4-3-2z" fill="#20c030" stroke="#0a5a10" strokeWidth="0.700" /> },
  { label: "Pane sync", art: <path d="M8 21c0-6 4-8 8-8s7 3 7 8zM13 15v6M16 13v8M19 14v7" fill="#f4d850" stroke="#6a5400" strokeWidth="0.900" /> },
  { label: "Pane route", art: <g><path d="M2 17h7v-2l4 3-4 4v-3H2z" fill="#e01010" stroke="#500" strokeWidth="0.600" /><path d="M16 21c5-1 4-5 4-8h-3l4-5 3 5h-2c1 5 0 8-6 9z" fill="#20d020" stroke="#044" strokeWidth="0.600" /></g> },
  { label: "Pane keys", art: <path d="M1 16h6v5H1zM9 16h6v5H9zM17 16h6v5h-6z" fill="#333" stroke="#777" strokeWidth="0.800" /> },
  { label: "Pane notes", art: <g><path d="M21.500 3v15" stroke="#8cb0f0" strokeWidth="2.500" /><ellipse cx="18.500" cy="18" rx="4" ry="3.500" fill="#2c54b4" /></g> },
  { label: "Pane link", art: <path d="M5 16h6v5H5zM11 21l6-5M11 16l6 5M17 16h6v5h-6z" fill="#333" stroke="#e01010" strokeWidth="1.300" /> },
];

function PaneTools() {
  return (
    <section className="flex min-h-0 flex-1 items-start border-t border-[#d4dcdc] bg-linear-to-b from-[#6f777a] to-[#d4d8da] pl-3 pt-0.5">
      <div className="flex flex-1 flex-col gap-0.5">
        {paneTools.map((t, i) => (
          <div key={t.label} className="flex items-center">
            <button type="button" aria-label={t.label} className={i === 0 ? "flex h-7 w-[31px] items-center justify-center rounded-sm border border-[#3a4244]" : "flex h-7 w-[31px] items-center justify-center"}>
              <Svg><MixerPanel />{t.art}</Svg>
            </button>
            {i > 0 && <Caret label={`${t.label} options`} />}
          </div>
        ))}
      </div>
      <div className="-ml-2 pr-px"><CloseBox label="Close pane tools" /></div>
    </section>
  );
}

/* ---------- rulers ---------- */

type Mark = { x: number; label: string };

function Ruler({ marks, flip, lead }: { marks: Mark[]; flip?: boolean; lead?: string }) {
  const ticks: number[] = [];
  marks.forEach((m, i) => {
    const span = i + 1 < marks.length ? marks[i + 1].x - m.x : m.x - marks[i - 1].x;
    for (let k = 1; k < 5; k++) ticks.push(Math.round(m.x + (span * k) / 5));
  });
  for (let x = marks[0].x - 22; x > 0; x -= 22) ticks.push(x);
  return (
    <div className={`relative h-full w-full overflow-hidden text-[10px] leading-[14px] text-white [text-shadow:1px_1px_0_#000] ${ARIAL} ${flip ? "border-t-2 border-white" : "border-b border-[#aab2b4]"}`}>
      <svg width="100%" height="14" className="absolute inset-0" shapeRendering="crispEdges">
        {marks.map((m) => (
          <g key={m.label}>
            <rect x={m.x - 1} y={flip ? 0 : 5} width="1" height={flip ? 13 : 9} fill="#000" />
            <rect x={m.x} y={flip ? 0 : 5} width="1" height={flip ? 13 : 9} fill="#fff" />
          </g>
        ))}
        {ticks.map((x) => (
          <g key={x}>
            <rect x={x - 1} y={flip ? 0 : 12} width="1" height="2" fill="#000" />
            <rect x={x} y={flip ? 0 : 12} width="1" height="2" fill="#fff" />
          </g>
        ))}
      </svg>
      {lead && <span className="absolute left-0 top-0">{lead}</span>}
      {marks.map((m) => (
        <span key={m.label} className="absolute top-0" style={{ left: m.x + 2 }}>{m.label}</span>
      ))}
    </div>
  );
}

const songMarks: Mark[] = ["1:45.00", "1:50.00", "1:55.00", "2:00.00", "2:05.00", "2:10.00", "2:15.00", "2:20.00"].map(
  (label, i) => ({ label, x: Math.round(80 + 108.6 * i) }),
);

const tempoMarks: Mark[] = [
  { x: 1, label: "0:00.00" }, { x: 80, label: "0:30.00" }, { x: 161, label: "1:00.00" }, { x: 243, label: "1:30.00" },
  { x: 316, label: "2:00.00" }, { x: 349, label: "2:30.00" }, { x: 419, label: "3:00.00" }, { x: 499, label: "3:30.00" },
  { x: 578, label: "4:00.00" }, { x: 658, label: "4:30.00" }, { x: 737, label: "5:00.00" }, { x: 816, label: "5:30.00" },
];

/* ---------- piano roll ---------- */

const rows = [5, 16, 26, 36, 47, 57, 67, 78, 88, 98, 109, 119, 129, 140, 150, 160, 171, 181, 191, 202, 212, 222, 232, 243];
const strongRows = new Set([36, 160]);
const beats = [7, 18, 30, 42, 54, 66, 78, 90, 102, 116, 128, 142, 155, 168, 181, 195, 209, 223, 237, 252, 267, 281, 296, 311, 327, 342, 358, 376, 391, 409, 426, 444, 463, 482, 502, 524, 546, 569, 592, 617, 643, 671, 699, 728, 760, 795, 831, 866, 904];
const bars = new Set([30, 78, 128, 181, 237, 296, 358, 426, 502, 592, 699, 831]);

type Note = [x: number, y: number, w: number, color: string];
const DIM = "#0000a0";
const MID = "#0000c0";
const LIT = "#0000e8";
const run = (y: number, xs: number[], color = DIM): Note[] => xs.map((x) => [x, y, 5, color]);
const chord = (y: number): Note[] => [
  [237, y, 14, MID], [251, y, 15, MID], [266, y, 8, MID], [274, y, 7, MID], [281, y, 8, MID],
  [503, y, 21, MID], [524, y, 22, MID], [546, y, 23, MID], [569, y, 12, MID],
];

const notes: Note[] = [
  ...run(67, [78, 84, 91, 97, 116, 123, 182, 189, 196, 203, 224, 230]),
  ...run(88, [54, 60, 66, 72, 103, 110, 155, 162, 168, 175, 209, 216]),
  ...run(140, [78, 84, 91, 97, 103, 110, 116, 123, 182, 189, 196, 203, 209, 216, 223, 230]),
  ...run(161, [54, 60, 66, 72, 155, 162, 168, 175]),
  ...run(171, [30, 36, 42, 48, 129, 135, 142, 149]),
  ...run(212, [30, 36, 42, 48, 129, 135, 142, 149]),
  ...chord(88), ...chord(119), ...chord(171), ...chord(243),
  [7, 140, 23, LIT], [7, 191, 23, LIT], [375, 212, 25, LIT], [483, 212, 20, LIT],
  [400, 232, 27, LIT], [427, 232, 27, LIT], [454, 232, 29, LIT], [427, 181, 27, LIT],
  [715, -5, 15, MID], [761, -5, 17, MID], [905, -5, 20, MID],
  [729, 36, 32, MID], [866, 36, 39, MID], [778, 47, 35, MID], [925, 47, 6, MID],
  [813, 67, 18, MID], [849, 67, 17, MID],
];

const GridLines = () => (
  <>
    {beats.map((x) => (
      <g key={x}>
        <rect x={x} y="0" width="1" height="100%" fill={bars.has(x) ? "#808080" : "#bcbcbc"} />
        <rect x={x + 1} y="0" width="1" height="100%" fill="#f4f4f4" />
      </g>
    ))}
  </>
);

function NoteGrid() {
  return (
    <svg width="100%" height="100%" className="block bg-[#eeeeee]" shapeRendering="crispEdges" role="img" aria-label="Notes">
      {rows.map((y) => (
        <g key={y}>
          <rect x="0" y={y} width="100%" height="1" fill={strongRows.has(y) ? "#909090" : "#bcbcbc"} />
          <rect x="0" y={y + 1} width="100%" height="1" fill="#fafafa" />
        </g>
      ))}
      <GridLines />
      {notes.map(([x, y, w, color], i) => (
        <g key={i}>
          <rect x={x} y={y} width={w} height="10" fill="#9a9ac4" />
          <rect x={x + 1} y={y + 1} width={w - 1} height="8" fill={color} />
        </g>
      ))}
      <rect x="362" y="0" width="1" height="100%" fill="#000" />
      <rect x="697" y="58" width="6" height="102" fill="#9a9ac4" />
      <rect x="698" y="59" width="4" height="100" fill="#000" />
    </svg>
  );
}

const hits: [number, number[]][] = [
  [23, [2]],
  [4, [7, 375, 400, 427, 454, 483]],
  [18, [30, 36, 42, 48, 54, 60, 66, 72, 78, 84, 91, 97, 103, 110, 116, 123, 129, 135, 142, 149, 155, 162, 168, 175, 182, 189, 196, 202, 209, 216, 223, 230]],
  [13, [237, 252, 266, 274, 281, 289, 297, 312, 320, 327, 335, 343, 351, 359, 503, 524, 546, 569, 581, 593, 618, 631, 644, 657, 671, 685, 715, 729, 761, 778, 813, 849, 866, 905, 925]],
];

function VelocityPane() {
  return (
    <svg width="100%" height="100%" className="block bg-[#eeeeee]" shapeRendering="crispEdges" role="img" aria-label="Velocities">
      <rect x="0" y="30" width="100%" height="1" fill="#bcbcbc" />
      <GridLines />
      {hits.map(([top, xs]) => xs.map((x) => <rect key={x} x={x} y={top} width="3" height="60" fill="#0000c0" />))}
    </svg>
  );
}

const blackKeys = [-5, 16, 47, 67, 88, 119, 140, 171, 191, 212, 243];
const whiteLines = [0, 21, 36, 52, 72, 93, 109, 124, 145, 160, 176, 196, 217, 232, 248];

function Keyboard() {
  return (
    <div className={`relative min-h-0 flex-1 overflow-hidden bg-[#fcfcf0] text-[10px] leading-3 text-black ${ARIAL}`}>
      <svg width="100%" height="100%" className="block" shapeRendering="crispEdges" role="img" aria-label="Keyboard">
        {whiteLines.map((y) => <rect key={y} x="0" y={y} width="100%" height="1" fill="#000" />)}
        {blackKeys.map((y) => <rect key={y} x="0" y={y} width="114" height="10" fill="#000" />)}
      </svg>
      <span className="absolute right-px top-[25px]">C6</span>
      <span className="absolute right-px top-[149px]">C5</span>
    </div>
  );
}

const ArrowGlyph = ({ d }: { d: string }) => <svg width="8" height="8" viewBox="0 0 8 8"><path d={d} fill="#333" /></svg>;

function Tabs() {
  return (
    <div className={`flex h-7 shrink-0 items-stretch text-[11px] ${UI}`}>
      <div className="w-[5px] shrink-0 border-b border-[#8a9598]" />
      <button type="button" className="flex w-[242px] shrink-0 items-center border-l border-t border-white font-bold text-white">
        <PianoIcon /><span className="ml-1.5 whitespace-nowrap">Piano Roll - Track 10 "rhythm guitar"</span>
      </button>
      <div className="flex flex-1 items-center border-b border-l border-b-white border-l-black">
        <button type="button" className="flex h-5 items-center border-r border-[#a4aeb0] pl-1 pr-1 text-[#b4bcbe]">
          <svg width="20" height="12" viewBox="0 0 20 12"><path d="M0 6h20" stroke="#111" /><path d="M4 6l2-3 1 6 2-9 2 11 2-9 2 6 2-2" fill="none" stroke="#3a5058" strokeWidth="2" /></svg>
          <span className="ml-[7px] text-[12px]">Timeline</span>
        </button>
        <div className="ml-auto flex items-center gap-[9px] pr-2">
          <button type="button" aria-label="Previous tab"><svg width="6" height="9" viewBox="0 0 6 9"><path d="M5.500.5v8L1 4.500z" fill="none" stroke="#ccd4d6" /></svg></button>
          <button type="button" aria-label="Next tab"><svg width="6" height="9" viewBox="0 0 6 9"><path d="M.5.500v8L5 4.500z" fill="none" stroke="#ccd4d6" /></svg></button>
          <button type="button" aria-label="Close tab"><svg width="9" height="9" viewBox="0 0 9 9"><path d="M1 1l7 7M8 1L1 8" stroke="#dce2e4" strokeWidth="1.500" /></svg></button>
        </div>
      </div>
    </div>
  );
}

function PianoToolbar() {
  const box = "h-5 w-[33px] shrink-0 border-2 border-[#d8e0e4] bg-black pl-1 text-[11px] text-[#00e000]";
  return (
    <div className={`flex h-[33px] shrink-0 items-center pt-1 text-[11px] text-[#0c1214] ${UI}`}>
      <Tool label="Select" on><Pointer /></Tool>
      <Tool label="Draw notes"><NoteIcon /></Tool>
      <Tool label="Erase"><RedX /></Tool>
      <Tool label="Paint"><Bucket /></Tool>
      <Sep narrow />
      <Tool label="Settings"><Gear /></Tool>
      <Sep />
      <Tool label="Roll zoom in"><ZoomInH /></Tool>
      <Tool label="Roll zoom out"><ZoomOutH /></Tool>
      <Tool label="Roll zoom in vertically"><ZoomInV /></Tool>
      <Tool label="Roll zoom out vertically"><ZoomOutV /></Tool>
      <Tool label="Roll zoom to selection"><ZoomRegion /></Tool>
      <Tool label="Roll zoom to song"><ZoomPage /></Tool>
      <Tool label="Roll previous zoom"><ZoomUndo /></Tool>
      <Sep />
      <Tool label="Snap to grid" on><GridIcon /></Tool>
      <Tool label="Quantize"><SquareWave /></Tool>
      <Sep narrow />
      <Tool label="Tools"><Wrench /></Tool>
      <Tool label="Preview notes" on><Speaker /></Tool>
      <Tool label="Add notes"><NotesPlus /></Tool>
      <label htmlFor="grid" className="ml-1.5">Grid</label>
      <DarkSelect id="grid" value="Beat" className="ml-0.5 w-[77px]" />
      <label htmlFor="length" className="ml-[5px] whitespace-nowrap">Note length</label>
      <DarkSelect id="length" value="Linked to grid" className="ml-0.5 w-[93px]" />
      <label htmlFor="velocity" className="ml-[5px]">Velocity</label>
      <input id="velocity" defaultValue="127" className={`ml-0.5 ${box}`} />
      <span className="ml-0.5"><Spin label="Adjust velocity" /></span>
      <label htmlFor="track" className="ml-[5px]">Track</label>
      <input id="track" defaultValue="10" className={`ml-0.5 ${box}`} />
      <span className="ml-0.5"><Spin label="Adjust track" /></span>
    </div>
  );
}

const thumbX = "border border-[#989898] bg-linear-to-b from-[#f6f6f6] via-[#e2e2e2] to-[#cacaca]";

function PianoRoll() {
  return (
    <section className="flex min-h-0 flex-1 flex-col border-t border-[#a8b0b2]">
      <Tabs />
      <PianoToolbar />
      <div className="flex min-h-0 flex-1">
        <div className="flex w-[191px] shrink-0 flex-col">
          <div className="h-[15px] shrink-0" />
          <Keyboard />
          <div className="flex h-[18px] shrink-0 items-center justify-end gap-2 pb-1 pr-[3px]">
            <svg width="11" height="8" viewBox="0 0 11 8"><path d="M1 6c2-5 4-4 5-1s3 1 4-2" fill="none" stroke="#1c2224" strokeWidth="2.500" /></svg>
            <svg width="12" height="12" viewBox="0 0 12 12"><rect width="12" height="12" fill="url(#silver)" /><path d="M3 1v10M6 3v6M9 1v10M1 5h4M7 7h4" stroke="#e8e8e8" /></svg>
          </div>
          <div className="h-[3px] shrink-0 border-y border-[#c0c8ca]" />
          <div className={`flex h-[75px] shrink-0 flex-col overflow-hidden pl-0.5 pt-2.5 text-[11px] ${UI}`}>
            <DarkSelect id="Controller" value="Velocity" className="w-[187px]" />
            <p className="ml-0.5 mt-1 h-[15px] w-[165px] shrink-0 bg-[#2c3336] pl-px leading-[15px] text-[#0d7a0d]">0 Bank change</p>
            <div className="mt-1.5 flex">
              <DarkTool label="Freehand"><BrushCurve /></DarkTool>
              <Tool label="Draw line"><BrushLine /></Tool>
            </div>
          </div>
        </div>
        <div className="mx-px w-0.5 shrink-0 border-x border-[#b8c0c2]" />
        <div className="flex min-w-0 flex-1 flex-col">
          <div className="h-[15px] shrink-0"><Ruler marks={songMarks} lead="0" /></div>
          <div className="flex min-h-0 flex-1">
            <div className="min-w-0 flex-1"><NoteGrid /></div>
            <div className="flex w-[17px] shrink-0 flex-col items-center bg-[#f0f0f0] py-1.5">
              <ArrowGlyph d="M0 6l4-4 4 4z" />
              <div className={`mt-[93px] flex h-10 w-[15px] flex-col items-center justify-center gap-0.5 rounded-xs ${thumbX}`}>
                {[0, 1, 2].map((i) => <span key={i} className="h-px w-2 bg-[#555]" />)}
              </div>
              <span className="mt-auto"><ArrowGlyph d="M0 2h8L4 6z" /></span>
            </div>
          </div>
          <div className="flex h-[18px] shrink-0 items-center bg-[#efefef] pl-1 pr-[21px]">
            <ArrowGlyph d="M6 0v8L2 4z" />
            <div className={`ml-[252px] flex h-[15px] w-[102px] items-center justify-center gap-0.5 rounded-xs ${thumbX}`}>
              {[0, 1, 2].map((i) => <span key={i} className="h-2 w-px bg-[#555]" />)}
            </div>
            <span className="ml-auto"><ArrowGlyph d="M2 0v8l4-4z" /></span>
          </div>
          <div className="h-[3px] shrink-0 border-b border-[#c0c8ca]" />
          <div className="mr-1 h-[59px] shrink-0"><VelocityPane /></div>
          <div className="h-4 shrink-0 border-t border-[#8c9496]"><Ruler marks={songMarks} lead="0" flip /></div>
        </div>
      </div>
    </section>
  );
}

/* ---------- tempo ---------- */

const curve = "0,60 11,60 11,84 13,84 15,68 16,58 232,58 232,56 248,56 252,57 260,58 276,59 290,65 312,73 328,83 338,91 343,94 346,93 352,84 355,74 358,65 366,64 369,60 3000,60 3000,400 0,400";
const events: [string, string][] = [["1:1:0", "4/4"], ["1:1:0", ""], ["3:1:0", ""], ["3:1:7", ""], ["3:1:13", ""], ["3:1:19", ""], ["3:1:25", ""], ["3:1:31", ""]];

function TempoTable() {
  return (
    <div className="flex w-[243px] shrink-0 flex-col bg-[#f0f0f0]">
      <div className="flex h-8 shrink-0 items-center">
        <Tool label="Step"><Footsteps /></Tool>
        <Tool label="Add tempo"><Metronome /></Tool>
        <Tool label="Delete tempo"><RedX /></Tool>
        <Tool label="Help"><Question /></Tool>
      </div>
      <div className="flex min-h-0 flex-1 overflow-hidden border border-[#828790] bg-white">
        <div className="min-w-0 flex-1 overflow-hidden pl-px">
          <table className={`w-full table-fixed border-collapse text-left text-[11px] text-black ${ARIAL}`}>
            <thead>
              <tr className={`h-[23px] bg-linear-to-b from-white to-[#f1f2f4] ${UI}`}>
                <th className="w-[55px] border-b border-r border-[#dcdee0] pl-1.5 font-normal">Time</th>
                <th className="w-[55px] border-b border-r border-[#dcdee0] pl-1.5 font-normal">Tempo</th>
                <th aria-label="Notes" className="border-b border-[#dcdee0]" />
              </tr>
            </thead>
            <tbody>
              {events.map(([time, tempo], i) => (
                <tr key={i} className="h-[17px]">
                  <td className="border-b border-r border-[#ececec] px-1 py-0 leading-4"><span className={i === 0 ? "bg-[#f0f0f0] py-px pl-0.5 pr-1.5" : "pl-0.5"}>{time}</span></td>
                  <td className="border-b border-r border-[#ececec] py-0 pl-1.5 leading-4">{tempo}</td>
                  <td className="border-b border-[#ececec] p-0" />
                </tr>
              ))}
            </tbody>
          </table>
        </div>
        <div className="mr-0.5 flex w-[15px] shrink-0 flex-col items-center bg-[#f0f0f0] py-1">
          <ArrowGlyph d="M0 6l4-4 4 4z" />
          <div className={`mt-1.5 h-[15px] w-[15px] shrink-0 rounded-xs ${thumbX}`} />
          <span className="mt-auto"><ArrowGlyph d="M0 2h8L4 6z" /></span>
        </div>
      </div>
    </div>
  );
}

function TempoPanel() {
  return (
    <section className="flex h-[204px] shrink-0 flex-col border-t border-[#c0c8ca] pt-px">
      <div className={`flex h-[17px] shrink-0 items-center justify-between border-t border-[#c0c8ca] pl-1 pr-0.5 text-[11px] text-[#141a1c] ${UI}`}>
        <h2>Tempo Evolution</h2>
        <CloseBox label="Close tempo evolution" />
      </div>
      <div className="flex min-h-0 flex-1">
        <div className="relative flex min-w-0 flex-1 flex-col pl-px">
          <div className="flex h-[26px] shrink-0 items-center">
            <DarkTool label="Draw tempo"><BrushCurve /></DarkTool>
            <Tool label="Tempo line"><BrushLine /></Tool>
            <Tool label="Clear tempo"><Trash /></Tool>
            <Sep narrow />
            <Tool label="Tempo zoom in"><ZoomInH /></Tool>
            <Tool label="Tempo zoom out"><ZoomOutH /></Tool>
            <Tool label="Tempo zoom to selection"><ZoomRegion /></Tool>
            <Tool label="Tempo zoom to song"><ZoomPage /></Tool>
            <Tool label="Tempo previous zoom"><ZoomUndo /></Tool>
            <Tool label="Tempo scale"><TempoMetronome /></Tool>
          </div>
          <div role="tooltip" className={`absolute left-[576px] top-0.5 rounded-sm border border-[#888] bg-linear-to-b from-white to-[#e4e5f0] px-1 text-[11px] leading-[17px] text-[#555] shadow-[3px_3px_2px_#0006] ${UI}`}>1:58.09</div>
          <div className="h-[14px] shrink-0"><Ruler marks={tempoMarks} /></div>
          <div className="h-[7px] shrink-0" />
          <svg width="100%" height="100" className="block min-h-0 flex-1 bg-[#eeeeee]" role="img" aria-label="Tempo curve" shapeRendering="crispEdges">
            <polygon points={curve} fill="#141494" />
            <rect x="312" y="0" width="1" height="100%" fill="#000" />
          </svg>
          <div className="h-[14px] shrink-0"><Ruler marks={tempoMarks} flip /></div>
          <div className="flex h-4 shrink-0 items-center bg-[#c6cbcc] pl-1 pr-1.5">
            <ArrowGlyph d="M6 0v8L2 4z" />
            <div className="mx-1.5 flex h-[14px] min-w-0 flex-1 rounded-xs border border-[#8a9090] bg-linear-to-b from-[#d2d5d6] to-[#a8adae]" />
            <span className="ml-2.5"><ArrowGlyph d="M2 0v8l4-4z" /></span>
          </div>
        </div>
        <div className="w-[3px] shrink-0 border-l border-[#c0c8ca]" />
        <TempoTable />
      </div>
    </section>
  );
}

/* ---------- status ---------- */

function StatusBar() {
  const pane = "relative flex h-full items-center overflow-hidden border-b border-r border-t border-b-white border-r-white border-t-[#5a6669] pl-0.5";
  return (
    <footer className={`flex h-[25px] shrink-0 gap-0.5 border-b-2 border-[#2c3436] text-[12px] text-black ${UI}`}>
      <div className={`${pane} w-32 shrink-0`}><span className="absolute inset-y-0 left-0 w-[5px] bg-[#00a800]" /><span className="relative">CPU: 3.9%</span></div>
      <div className={`${pane} w-[189px] shrink-0 border-l border-l-white`}><span className="absolute inset-y-0 left-0 w-[78px] bg-[#00a800]" /><span className="relative">Disk space: 40 Gb</span></div>
      <div className={`${pane} min-w-0 flex-1`}>Move events</div>
      <div className={`${pane} w-[318px] shrink-0`}>Tracks: 25</div>
    </footer>
  );
}

const VDivider = () => <div className="mr-px w-0.5 shrink-0 border-x border-[#c0c8ca]" />;

export default function App() {
  return (
    <div className="flex h-screen min-h-[720px] w-full flex-col overflow-hidden bg-[#748287]">
      <Defs />
      <TitleBar />
      <div className="flex shrink-0 flex-col border-l-2 border-dotted border-[#dde2e2] bg-linear-to-b from-[#bcc7c7] to-[#82908f]">
        <MenuBar />
        <MainToolbar />
        <Transport />
      </div>
      <main className="flex min-h-0 flex-1 border-t border-[#a8b0b2]">
        <aside className="flex w-[67px] shrink-0 flex-col gap-0.5"><MasterStrip /><RecordingPanel /></aside>
        <VDivider />
        <aside className="flex w-[68px] shrink-0 flex-col gap-0.5"><SelectedStrip /><PaneTools /></aside>
        <VDivider />
        <div className="flex min-w-0 flex-1 flex-col"><PianoRoll /><TempoPanel /></div>
      </main>
      <StatusBar />
    </div>
  );
}
